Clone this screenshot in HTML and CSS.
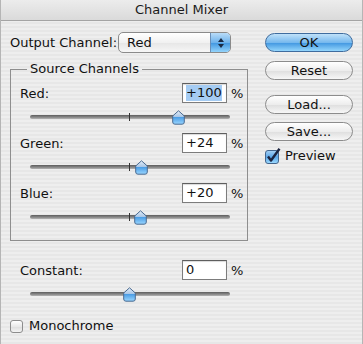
FILE: index.html
```html
<!DOCTYPE html>
<html>
<head>
    <title>Channel Mixer</title>
    <link rel="stylesheet" href="styles.css">
</head>
<body>
    <svg class="defs" width="0" height="0">
        <defs>
            <linearGradient id="thumb-fill" x1="0" y1="0" x2="0" y2="1">
                <stop offset="0" stop-color="#e4eef8"/>
                <stop offset="0.45" stop-color="#a9c6e6"/>
                <stop offset="0.5" stop-color="#4d9fe6"/>
                <stop offset="1" stop-color="#9ad6ff"/>
            </linearGradient>
            <linearGradient id="check-fill" x1="0" y1="0" x2="0" y2="1">
                <stop offset="0" stop-color="#a9d2f5"/>
                <stop offset="0.5" stop-color="#5aa6e8"/>
                <stop offset="1" stop-color="#9fdcff"/>
            </linearGradient>
        </defs>
    </svg>
    <div class="window">
        <div class="titlebar">Channel Mixer</div>
        <div class="dialog">
            <div class="main">
                <div class="output-row">
                    <span class="label">Output Channel:</span>
                    <div class="select">
                        <span class="select-value">Red</span>
                        <span class="stepper">
                            <svg width="8" height="12" viewBox="0 0 8 12">
                                <path d="M4 1 L7 5 H1 Z" fill="#1a2a44"/>
                                <path d="M4 11 L7 7 H1 Z" fill="#1a2a44"/>
                            </svg>
                        </span>
                    </div>
                </div>

                <fieldset class="group">
                    <legend>Source Channels</legend>
                    <div class="channel">
                        <div class="value-row">
                            <span class="label">Red:</span>
                            <span class="field"><span class="selected">+100</span></span>
                            <span class="pct">%</span>
                        </div>
                        <div class="slider">
                            <div class="track"></div>
                            <span class="tick"></span>
                            <svg class="thumb" style="left: 142px" width="13" height="15" viewBox="0 0 13 15"><path d="M6.5 0.8 L12.3 6 V12 Q12.3 14.2 10.1 14.2 H2.9 Q0.7 14.2 0.7 12 V6 Z" fill="url(#thumb-fill)" stroke="#4a6a90"/></svg>
                        </div>
                    </div>
                    <div class="channel">
                        <div class="value-row">
                            <span class="label">Green:</span>
                            <span class="field">+24</span>
                            <span class="pct">%</span>
                        </div>
                        <div class="slider">
                            <div class="track"></div>
                            <span class="tick"></span>
                            <svg class="thumb" style="left: 105px" width="13" height="15" viewBox="0 0 13 15"><path d="M6.5 0.8 L12.3 6 V12 Q12.3 14.2 10.1 14.2 H2.9 Q0.7 14.2 0.7 12 V6 Z" fill="url(#thumb-fill)" stroke="#4a6a90"/></svg>
                        </div>
                    </div>
                    <div class="channel">
                        <div class="value-row">
                            <span class="label">Blue:</span>
                            <span class="field">+20</span>
                            <span class="pct">%</span>
                        </div>
                        <div class="slider">
                            <div class="track"></div>
                            <span class="tick"></span>
                            <svg class="thumb" style="left: 104px" width="13" height="15" viewBox="0 0 13 15"><path d="M6.5 0.8 L12.3 6 V12 Q12.3 14.2 10.1 14.2 H2.9 Q0.7 14.2 0.7 12 V6 Z" fill="url(#thumb-fill)" stroke="#4a6a90"/></svg>
                        </div>
                    </div>
                </fieldset>

                <div class="channel constant">
                    <div class="value-row">
                        <span class="label">Constant:</span>
                        <span class="field">0</span>
                        <span class="pct">%</span>
                    </div>
                    <div class="slider">
                        <div class="track"></div>
                        <svg class="thumb" style="left: 93px" width="13" height="15" viewBox="0 0 13 15"><path d="M6.5 0.8 L12.3 6 V12 Q12.3 14.2 10.1 14.2 H2.9 Q0.7 14.2 0.7 12 V6 Z" fill="url(#thumb-fill)" stroke="#4a6a90"/></svg>
                    </div>
                </div>

                <div class="check mono">
                    <span class="box"></span>
                    <span>Monochrome</span>
                </div>
            </div>

            <div class="side">
                <button class="btn btn-ok">OK</button>
                <button class="btn btn-reset">Reset</button>
                <button class="btn btn-load">Load...</button>
                <button class="btn btn-save">Save...</button>
                <div class="check preview">
                    <svg class="checked" width="16" height="16" viewBox="0 0 16 16">
                        <rect x="0.5" y="2.5" width="13" height="13" rx="2.5" fill="url(#check-fill)" stroke="#44658c"/>
                        <path d="M3 8.5 L6 12.5 L14.5 0.8" fill="none" stroke="#1b2440" stroke-width="2.4" stroke-linejoin="round"/>
                    </svg>
                    <span>Preview</span>
                </div>
            </div>
        </div>
    </div>
</body>
</html>
```

FILE: styles.css
```css
* {
    box-sizing: border-box;
}
body {
    margin: 0;
    font-family: 'DejaVu Sans', sans-serif;
    font-size: 13px;
    color: #111;
}
.defs {
    position: absolute;
}
.window {
    width: 363px;
    height: 344px;
    background: repeating-linear-gradient(to bottom, #eeeeee 0, #eeeeee 2px, #e7e7e7 2px, #e7e7e7 4px);
    border-left: 1px solid #b5b5b5;
    border-right: 1px solid #b5b5b5;
}
.titlebar {
    height: 21px;
    line-height: 20px;
    text-align: center;
    background: linear-gradient(#ececec, #dadada);
    border-bottom: 1px solid #a4a4a4;
    color: #1a1a1a;
}
.dialog {
    display: flex;
    padding-left: 9px;
}
.main {
    width: 238px;
    padding-top: 11px;
}
.output-row {
    display: flex;
    align-items: center;
    height: 21px;
    padding-right: 17px;
}
.output-row .label {
    flex: 1;
}
.select {
    display: flex;
    width: 113px;
    height: 21px;
    border: 1px solid #8a8a8a;
    border-radius: 5px;
    background: linear-gradient(#ffffff, #f1f1f1 50%, #e6e6e6 51%, #f6f6f6);
    overflow: hidden;
}
.select-value {
    flex: 1;
    padding-left: 8px;
    line-height: 19px;
}
.stepper {
    display: flex;
    align-items: center;
    justify-content: center;
    width: 20px;
    border-left: 1px solid #6a8fb8;
    background: linear-gradient(#b9dcf8, #6fb3ec 50%, #3f95e0 51%, #93d3fb);
}
.group {
    margin: 9px 0 0;
    padding: 0 3px 7px 9px;
    border: 1px solid #8e8e8e;
}
.group legend {
    margin-left: 7px;
    padding: 0 3px;
    line-height: 14px;
}
.channel:first-of-type {
    margin-top: 7px;
}
.value-row {
    display: flex;
    align-items: center;
    height: 20px;
}
.value-row .label {
    flex: 1;
}
.field {
    width: 45px;
    height: 20px;
    padding: 1px 0 0 3px;
    line-height: 16px;
    background: #fff;
    border: 1px solid #7c7c7c;
    border-top-color: #5e5e5e;
    box-shadow: inset 0 1px 1px rgba(0, 0, 0, 0.15);
}
.selected {
    display: inline-block;
    background: #a5ccf3;
}
.pct {
    width: 13px;
    margin-left: 4px;
}
.slider {
    position: relative;
    width: 200px;
    height: 30px;
    margin-left: 10px;
}
.track {
    position: relative;
    top: 12px;
    height: 4px;
    border-radius: 2px;
    background: linear-gradient(#5c5c5c, #8c8c8c 60%, #b4b4b4);
}
.tick {
    position: absolute;
    left: 99px;
    top: 10px;
    width: 1px;
    height: 8px;
    background: #333;
}
.thumb {
    position: absolute;
    top: 7px;
}
.constant {
    margin-top: 19px;
    padding: 0 4px 0 10px;
}
.check {
    display: flex;
    align-items: center;
    gap: 6px;
    line-height: 14px;
}
.mono {
    margin-top: 9px;
}
.box {
    width: 13px;
    height: 13px;
    border: 1px solid #8d8d8d;
    border-radius: 3px;
    background: linear-gradient(#ffffff, #e9e9e9 50%, #dcdcdc 51%, #f4f4f4);
}
.side {
    display: flex;
    flex-direction: column;
    width: 88px;
    margin-left: 17px;
    padding-top: 12px;
}
.btn {
    height: 19px;
    padding: 0;
    font-family: 'DejaVu Sans', sans-serif;
    font-size: 13px;
    line-height: 17px;
    color: #111;
    border: 1px solid #8c8c8c;
    border-radius: 10px;
    background: linear-gradient(#ffffff, #ededed 50%, #dedede 51%, #f7f7f7);
}
.btn-ok {
    border-color: #3f6c9e;
    background: linear-gradient(#c0e1f9, #77b9ee 50%, #3f95e0 51%, #94d6fc);
}
.btn-reset {
    margin-top: 9px;
}
.btn-load {
    margin-top: 15px;
}
.btn-save {
    margin-top: 8px;
}
.preview {
    margin-top: 7px;
    gap: 4px;
}
```
